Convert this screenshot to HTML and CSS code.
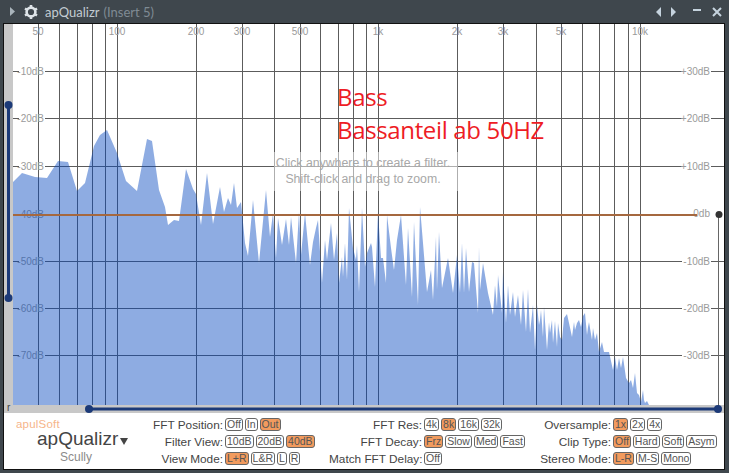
FILE: index.html
```html
<!DOCTYPE html>
<html lang="en">

<head>
  <meta charset="UTF-8" />
  <title>apQualizr</title>
  <link rel="stylesheet" href="styles.css">
</head>

<body>
  <div class="window">
    <div class="titlebar">
      <svg class="title-arrow" width="6" height="9" viewBox="0 0 6 9"><path d="M0 0 L5 4.5 L0 9 Z" /></svg>
      <svg class="gear" width="16" height="16" viewBox="0 0 16 16">
        <circle cx="8" cy="8" r="4.4" />
        <path d="M8 1 V3 M8 13 V15 M2 4.5 L3.7 5.5 M12.3 10.5 L14 11.5 M2 11.5 L3.7 10.5 M12.3 5.5 L14 4.5" />
      </svg>
      <span class="title-name">apQualizr</span>
      <span class="title-slot">(Insert 5)</span>
      <div class="title-buttons">
        <svg width="6" height="10" viewBox="0 0 6 10"><path d="M5 0 V10 L0 5 Z" /></svg>
        <svg width="6" height="10" viewBox="0 0 6 10"><path d="M0 0 V10 L5 5 Z" /></svg>
        <svg class="min-icon" width="8" height="10" viewBox="0 0 8 10"><path d="M0 2 H8 V4 H0 Z" /></svg>
        <svg width="10" height="10" viewBox="0 0 10 10"><path class="close-x" d="M1 1 L9 9 M9 1 L1 9" /></svg>
      </div>
    </div>

    <div class="frame">
      <svg class="graph" width="720" height="389" viewBox="4 24 720 389">
        <rect class="strip" x="4" y="24" width="9" height="389" />
        <rect class="strip" x="4" y="405" width="720" height="8" />

        <path class="grid" d="M38.5 24V405M59.5 24V405M77.5 24V405M92.5 24V405M105.5 24V405M117.5 24V405M196.5 24V405M242.5 24V405M274.5 24V405M300.5 24V405M320.5 24V405M338.5 24V405M353.5 24V405M366.5 24V405M378.5 24V405M457.5 24V405M503.5 24V405M536.5 24V405M561.5 24V405M582.5 24V405M599.5 24V405M614.5 24V405M628.5 24V405M640.5 24V405" />
        <path class="grid" d="M13 71.5H19M45 71.5H682M711 71.5H724M13 118.5H19M45 118.5H682M711 118.5H724M13 166.5H19M45 166.5H682M711 166.5H724M13 261.5H19M45 261.5H682M711 261.5H724M13 308.5H19M45 308.5H682M711 308.5H724M13 355.5H19M45 355.5H682M711 355.5H724" />

        <g class="axis-x">
          <text x="38" y="35">50</text>
          <text x="117" y="35">100</text>
          <text x="196" y="35">200</text>
          <text x="242" y="35">300</text>
          <text x="300" y="35">500</text>
          <text x="378" y="35">1k</text>
          <text x="457" y="35">2k</text>
          <text x="503" y="35">3k</text>
          <text x="561" y="35">5k</text>
          <text x="640" y="35">10k</text>
        </g>
        <g class="axis-y">
          <text x="44" y="75">-10dB</text>
          <text x="44" y="122">-20dB</text>
          <text x="44" y="170">-30dB</text>
          <text x="44" y="218">-40dB</text>
          <text x="44" y="265">-50dB</text>
          <text x="44" y="312">-60dB</text>
          <text x="44" y="359">-70dB</text>
          <text x="710" y="75">+30dB</text>
          <text x="710" y="122">+20dB</text>
          <text x="710" y="170">+10dB</text>
          <text x="710" y="217">0db</text>
          <text x="710" y="265">-10dB</text>
          <text x="710" y="312">-20dB</text>
          <text x="710" y="359">-30dB</text>
        </g>

        <rect class="hint-box" x="274" y="152" width="184" height="39" />
        <text class="hint" x="363" y="167">Click anywhere to create a filter.</text>
        <text class="hint" x="363" y="183">Shift-click and drag to zoom.</text>

        <polygon class="spectrum" points="13,405 13,182 22,173 35,177 47,178 58,161 68,162 77,191 85,183 94,146 100,135 107,130 117,153 126,181 137,191 147,139 152,141 159,190 165,207 168,225 174,220 179,221 186,169 193,189 196,194 201,225 207,173 213,224 220,187 224,212 228,198 231,205 234,183 237,208 241,202 245,243 248,256 253,200 259,263 266,190 270,237 273,213 276,258 278,218 282,245 286,219 289,245 291,217 296,263 299,212 301,255 305,213 310,265 313,242 316,228 318,220 322,283 325,240 327,260 331,223 334,260 337,233 339,283 342,257 343,277 345,243 347,280 349,208 353,248 356,260 357,245 359,292 362,208 365,267 367,253 371,243 372,247 375,287 378,212 381,258 383,258 386,283 387,215 391,248 394,270 397,240 401,215 406,285 408,228 412,297 414,222 418,305 420,207 423,243 427,292 431,270 433,300 436,237 437,290 439,232 442,288 448,258 453,293 457,255 460,293 462,243 464,293 466,248 469,292 472,262 474,263 478,313 479,247 480,290 483,263 488,293 493,315 495,285 497,307 498,275 502,313 503,272 506,323 508,285 510,315 513,292 515,317 518,295 521,325 523,290 526,332 528,289 530,333 533,305 535,350 537,305 539,325 540,320 541,310 543,337 544,307 547,350 549,322 550,333 552,320 553,343 555,321 557,347 558,323 560,337 562,340 564,318 567,314 569,323 572,337 574,322 575,330 577,323 579,320 581,327 583,316 585,313 587,335 588,327 589,322 592,340 593,328 595,340 597,333 599,352 602,342 604,352 609,352 613,370 615,357 617,370 619,358 621,368 623,357 626,378 629,383 631,380 633,388 635,373 637,393 639,395 641,402 643,390 644,400 645,403 647,401 649,405" />

        <path class="gain-line" d="M13 215H697" />
        <path class="edge-line" d="M718.5 215V409" />
        <circle class="gain-dot" cx="719" cy="214.5" r="3.5" />

        <path class="slider-line" d="M8.5 105V298M89 409H718" />
        <circle class="slider-dot" cx="8.5" cy="105" r="4" />
        <circle class="slider-dot" cx="8.5" cy="298" r="4" />
        <circle class="slider-dot" cx="89" cy="409" r="4" />
        <circle class="slider-dot" cx="718" cy="409" r="4" />
        <text class="corner" x="7" y="411">r</text>

        <text class="note" x="337" y="106">Bass</text>
        <text class="note" x="337" y="139">Bassanteil ab 50HZ</text>
      </svg>

      <div class="panel">
        <div class="brand">
          <div class="brand-maker">apulSoft</div>
          <div class="brand-name">apQualizr<svg class="brand-arrow" width="8" height="7" viewBox="0 0 8 7"><path d="M0 0 H8 L4 7 Z" /></svg></div>
          <div class="brand-preset">Scully</div>
        </div>

        <div class="group group-a">
          <span class="label">FFT Position:</span>
          <div class="btns"><span class="btn">Off</span><span class="btn">In</span><span class="btn on">Out</span></div>
          <span class="label">Filter View:</span>
          <div class="btns"><span class="btn">10dB</span><span class="btn">20dB</span><span class="btn on">40dB</span></div>
          <span class="label">View Mode:</span>
          <div class="btns"><span class="btn on">L+R</span><span class="btn">L&amp;R</span><span class="btn">L</span><span class="btn">R</span></div>
        </div>

        <div class="group group-b">
          <span class="label">FFT Res:</span>
          <div class="btns"><span class="btn">4k</span><span class="btn on">8k</span><span class="btn">16k</span><span class="btn">32k</span></div>
          <span class="label">FFT Decay:</span>
          <div class="btns"><span class="btn on">Frz</span><span class="btn">Slow</span><span class="btn">Med</span><span class="btn">Fast</span></div>
          <span class="label">Match FFT Delay:</span>
          <div class="btns"><span class="btn">Off</span></div>
        </div>

        <div class="group group-c">
          <span class="label">Oversample:</span>
          <div class="btns"><span class="btn on">1x</span><span class="btn">2x</span><span class="btn">4x</span></div>
          <span class="label">Clip Type:</span>
          <div class="btns"><span class="btn on">Off</span><span class="btn">Hard</span><span class="btn">Soft</span><span class="btn">Asym</span></div>
          <span class="label">Stereo Mode:</span>
          <div class="btns"><span class="btn on">L-R</span><span class="btn">M-S</span><span class="btn">Mono</span></div>
        </div>
      </div>
    </div>
  </div>
</body>

</html>
```

FILE: styles.css
```css
body {
  margin: 0;
  padding: 0;
  background-color: #3f474d;
  font-family: "Liberation Sans", Arial, sans-serif;
  overflow: hidden;
}

.window {
  width: 729px;
  height: 473px;
  background-color: #3f474d;
  display: flex;
  flex-direction: column;
}

/* title bar */
.titlebar {
  height: 23px;
  display: flex;
  align-items: center;
  padding-left: 10px;
  font-family: Lato, sans-serif;
  font-size: 13px;
}

.title-arrow {
  fill: #a9b4bb;
  margin-right: 7px;
}

.gear {
  margin-right: 6px;
}

.gear circle {
  fill: none;
  stroke: #dfe5e9;
  stroke-width: 2.6;
}

.gear path {
  stroke: #dfe5e9;
  stroke-width: 2.6;
}

.title-name {
  color: #c3ccd3;
  margin-right: 4px;
}

.title-slot {
  color: #7f8b94;
}

.title-buttons {
  margin-left: auto;
  margin-right: 7px;
  display: flex;
  align-items: center;
  gap: 9px;
}

.title-buttons path {
  fill: #c5d3de;
}

.title-buttons .min-icon {
  margin-left: 7px;
  margin-right: 2px;
}

.title-buttons .close-x {
  fill: none;
  stroke: #c5d3de;
  stroke-width: 2;
}

/* main frame */
.frame {
  width: 720px;
  height: 445px;
  margin-left: 3px;
  border: 1px solid #111;
  background-color: #fff;
  display: flex;
  flex-direction: column;
}

.graph {
  display: block;
  flex: none;
}

.strip {
  fill: #c8c8c8;
}

.grid {
  fill: none;
  stroke: #5c5c5c;
  stroke-width: 1;
}

.axis-x text,
.axis-y text {
  font-size: 10px;
  fill: #9a9a9a;
}

.axis-x text {
  text-anchor: middle;
}

.axis-y text {
  text-anchor: end;
}

.hint-box {
  fill: #fff;
  fill-opacity: 0.5;
}

.hint {
  font-size: 12.3px;
  fill: #a8a8a8;
  text-anchor: middle;
}

.spectrum {
  fill: rgb(4, 70, 190);
  fill-opacity: 0.45;
}

.gain-line {
  fill: none;
  stroke: #a5683f;
  stroke-width: 2;
}

.edge-line {
  fill: none;
  stroke: #666;
  stroke-width: 1;
}

.gain-dot {
  fill: #333;
}

.slider-line {
  fill: none;
  stroke: #1c3a78;
  stroke-width: 3;
}

.slider-dot {
  fill: #1c3a78;
}

.corner {
  font-size: 10px;
  fill: #444;
}

.note {
  font-family: "Open Sans", sans-serif;
  font-size: 24px;
  letter-spacing: -0.35px;
  fill: #ee1c25;
}

/* bottom panel */
.panel {
  flex: 1;
  display: flex;
  min-height: 0;
}

.brand {
  width: 146px;
  flex: none;
  padding-top: 5px;
  box-sizing: border-box;
}

.brand-maker {
  margin-left: 12px;
  font-size: 11.5px;
  line-height: 13px;
  letter-spacing: 0.2px;
  color: #f6b58a;
}

.brand-name {
  margin-left: 33px;
  margin-top: -2px;
  font-size: 19px;
  line-height: 20px;
  color: #444;
  white-space: nowrap;
}

.brand-arrow {
  fill: #444;
  margin-left: 2px;
}

.brand-preset {
  margin-top: 1px;
  padding-right: 2px;
  text-align: center;
  font-size: 12px;
  line-height: 14px;
  color: #8b8b8b;
}

.group {
  display: grid;
  grid-template-rows: repeat(3, 17px);
  align-items: center;
  column-gap: 2px;
  padding-top: 3px;
  flex: none;
}

.group-a {
  grid-template-columns: 73px 104px;
}

.group-b {
  grid-template-columns: 93px 98px;
}

.group-c {
  grid-template-columns: 89px 100px;
}

.label {
  text-align: right;
  font-size: 11.8px;
  color: #444;
  white-space: nowrap;
}

.btns {
  display: flex;
  gap: 2px;
}

.btn {
  height: 11px;
  line-height: 11px;
  padding: 0 1px;
  border: 1px solid #666;
  border-radius: 3px;
  font-size: 10.5px;
  color: #555;
  background-color: #fff;
}

.btn.on {
  background-color: #f29b5e;
}
```
